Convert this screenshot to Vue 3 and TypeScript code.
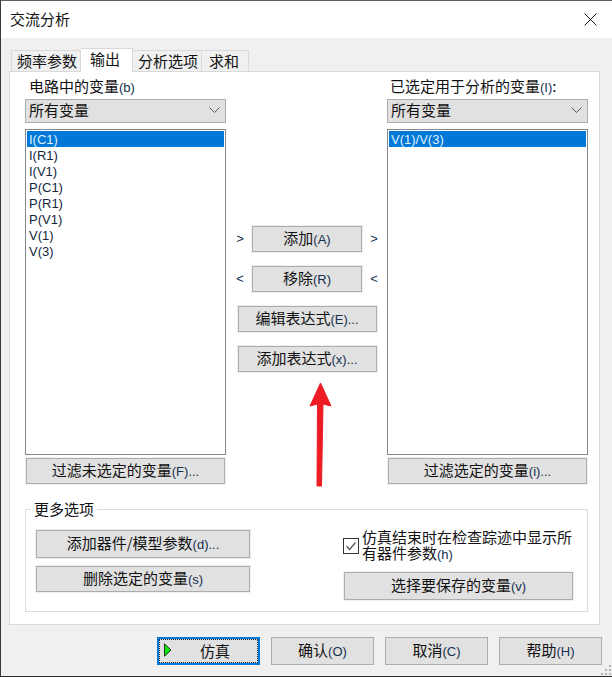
<script setup lang="ts">
const tabs = [
  { id: 'freq', name: '频率参数' },
  { id: 'output', name: '输出' },
  { id: 'options', name: '分析选项' },
  { id: 'sum', name: '求和' },
]
const leftVars = ['I(C1)', 'I(R1)', 'I(V1)', 'P(C1)', 'P(R1)', 'P(V1)', 'V(1)', 'V(3)']
const rightVars = ['V(1)/V(3)']
const footer = [
  { id: 'ok', name: '确认', key: '(O)' },
  { id: 'cancel', name: '取消', key: '(C)' },
  { id: 'help', name: '帮助', key: '(H)' },
]
</script>

<template>
  <div class="dialog">
    <div class="titlebar">
      <span class="title">交流分析</span>
      <svg class="close" width="13" height="13" viewBox="0 0 13 13">
        <path d="M0.5 0.5L12.5 12.5M12.5 0.5L0.5 12.5" stroke="#1a1a1a" stroke-width="1" fill="none" />
      </svg>
    </div>

    <div class="body">
      <div class="tabs">
        <div v-for="t in tabs" :key="t.id" class="tab" :class="[t.id, { active: t.id === 'output' }]">{{ t.name }}</div>
      </div>

      <div class="panel">
        <div class="columns">
          <div class="col">
            <div class="label">电路中的变量<span class="k">(b)</span></div>
            <div class="select">
              <span>所有变量</span>
              <svg width="11" height="6" viewBox="0 0 11 6"><path d="M0.5 0.5L5.5 5.5L10.5 0.5" stroke="#5a5a5a" fill="none" /></svg>
            </div>
            <ul class="list">
              <li v-for="(v, i) in leftVars" :key="v" :class="{ sel: i === 0 }">{{ v }}</li>
            </ul>
            <button class="btn filter">过滤未选定的变量<span class="k">(F)...</span></button>
          </div>

          <div class="center">
            <div class="move-row">
              <span class="mark">&gt;</span>
              <button class="btn move">添加<span class="k">(A)</span></button>
              <span class="mark">&gt;</span>
            </div>
            <div class="move-row">
              <span class="mark">&lt;</span>
              <button class="btn move">移除<span class="k">(R)</span></button>
              <span class="mark">&lt;</span>
            </div>
            <button class="btn expr">编辑表达式<span class="k">(E)...</span></button>
            <button class="btn expr">添加表达式<span class="k">(x)...</span></button>
          </div>

          <div class="col">
            <div class="label right">已选定用于分析的变量<span class="k">(I)</span>:</div>
            <div class="select">
              <span>所有变量</span>
              <svg width="11" height="6" viewBox="0 0 11 6"><path d="M0.5 0.5L5.5 5.5L10.5 0.5" stroke="#5a5a5a" fill="none" /></svg>
            </div>
            <ul class="list">
              <li v-for="v in rightVars" :key="v" class="sel">{{ v }}</li>
            </ul>
            <button class="btn filter">过滤选定的变量<span class="k">(i)...</span></button>
          </div>
        </div>

        <fieldset class="group">
          <legend>更多选项</legend>
          <div class="group-left">
            <button class="btn device">添加器件/模型参数<span class="k">(d)...</span></button>
            <button class="btn remove">删除选定的变量<span class="k">(s)</span></button>
          </div>
          <div class="group-right">
            <div class="check-row">
              <span class="check">
                <svg width="14" height="14" viewBox="0 0 14 14"><path d="M2.5 7L5.5 10.5L11.5 3.5" stroke="#555" stroke-width="1.2" fill="none" /></svg>
              </span>
              <div class="check-text">
                <div>仿真结束时在检查踪迹中显示所</div>
                <div>有器件参数<span class="k">(h)</span></div>
              </div>
            </div>
            <button class="btn save">选择要保存的变量<span class="k">(v)</span></button>
          </div>
        </fieldset>

        <svg class="arrow" width="24" height="108" viewBox="0 0 24 108">
          <path d="M12.5 1L23 24L15 22L13.5 104L9 104L9.5 22L2 24Z" fill="#ed1c24" stroke="#ed1c24" stroke-linejoin="round" />
        </svg>
      </div>

      <div class="footer">
        <button class="btn primary">
          <span class="focus">
            <svg class="play" width="8" height="14" viewBox="0 0 8 14"><path d="M0.5 0.8L7 7L0.5 13.2Z" fill="#12e60f" stroke="#1c3a1c" /></svg>
            <span>仿真</span>
          </span>
        </button>
        <button v-for="b in footer" :key="b.id" class="btn foot">{{ b.name }}<span class="k">{{ b.key }}</span></button>
      </div>

      <svg class="grip" width="11" height="11" viewBox="0 0 11 11">
        <g fill="#b4b4b4">
          <rect x="8" y="0" width="2" height="2" />
          <rect x="4" y="4" width="2" height="2" />
          <rect x="8" y="4" width="2" height="2" />
          <rect x="0" y="8" width="2" height="2" />
          <rect x="4" y="8" width="2" height="2" />
          <rect x="8" y="8" width="2" height="2" />
        </g>
      </svg>
    </div>
  </div>
</template>

<style>
html, body {
  margin: 0;
  overflow: hidden;
  background: #f0f0f0;
}
</style>

<style scoped>
.dialog {
  width: 612px;
  height: 677px;
  box-sizing: border-box;
  border-top: 1px solid #5f5f5f;
  border-left: 1px solid #3a3a3a;
  border-bottom: 1px solid #2c2c2c;
  display: flex;
  flex-direction: column;
  font-family: "Noto Sans CJK SC", "Liberation Sans", sans-serif;
  font-size: 15px;
  line-height: 16px;
  color: #111;
  overflow: hidden;
}
.k {
  font-family: "Liberation Sans", sans-serif;
  font-size: 13px;
  color: #14304f;
}
.titlebar {
  height: 37px;
  flex: none;
  background: #fff;
  display: flex;
  align-items: center;
  justify-content: space-between;
  padding: 0 15px 0 9px;
}
.title {
  margin-bottom: 2px;
}
.body {
  flex: 1;
  position: relative;
  background: #f0f0f0;
  padding: 10px 0 0 8px;
}
.tabs {
  display: flex;
  align-items: flex-end;
  height: 23px;
  padding-left: 2px;
  position: relative;
  z-index: 1;
}
.tab {
  height: 20px;
  padding: 0 3px 0 5px;
  line-height: 20px;
  border: 1px solid #d9d9d9;
  border-bottom: none;
  border-left: none;
  background: #f0f0f0;
}
.tab.freq {
  border-left: 1px solid #d9d9d9;
}
.tab.sum {
  padding: 0 9px 0 7px;
}
.tab.active {
  height: 23px;
  margin-bottom: -1px;
  padding: 0 12px 0 9px;
  line-height: 20px;
  background: #fff;
}
.panel {
  position: relative;
  width: 591px;
  height: 554px;
  box-sizing: border-box;
  background: #fff;
  border: 1px solid #d9d9d9;
  padding: 6px 11px 0 15px;
}
.columns {
  display: grid;
  grid-template-columns: 201px 1fr 201px;
}
.col {
  display: flex;
  flex-direction: column;
}
.label {
  height: 21px;
  padding-left: 4px;
  line-height: 15px;
}
.label.right {
  padding-left: 3px;
}
.select {
  height: 24px;
  box-sizing: border-box;
  border: 1px solid #adadad;
  background: #e1e1e1;
  display: flex;
  align-items: center;
  justify-content: space-between;
  padding: 0 5px 2px 3px;
}
.list {
  list-style: none;
  margin: 6px 0 0;
  padding: 1px;
  height: 326px;
  box-sizing: border-box;
  border: 1px solid #828790;
  background: #fff;
  font-family: "Liberation Sans", sans-serif;
  font-size: 13px;
  color: #14263c;
}
.list li {
  height: 16px;
  line-height: 17px;
  padding-left: 2px;
}
.list li.sel {
  background: #0078d7;
  color: #dff0ff;
}
.btn {
  font: inherit;
  color: inherit;
  padding: 0;
  margin: 0;
  box-sizing: border-box;
  border: 1px solid #adadad;
  background: #e1e1e1;
  box-shadow: 0 0 0 1px #f0f0f0;
  white-space: nowrap;
}
.filter {
  height: 26px;
  margin: 3px 1px 0;
}
.center {
  display: flex;
  flex-direction: column;
  align-items: center;
  gap: 14px;
  padding: 148px 0 0 1px;
}
.move-row {
  display: flex;
  align-items: center;
  justify-content: space-between;
  width: 142px;
  height: 26px;
}
.mark {
  font-family: "Liberation Sans", sans-serif;
  font-size: 13px;
  color: #14304f;
  width: 8px;
  text-align: center;
}
.move {
  width: 110px;
  height: 26px;
}
.expr {
  width: 139px;
  height: 26px;
}
.group {
  margin: 17px 0 0;
  padding: 13px 14px 0 10px;
  height: 111px;
  box-sizing: border-box;
  border: 1px solid #dcdcdc;
  display: flex;
  justify-content: space-between;
  min-width: 0;
}
.group legend {
  margin-left: -5px;
  padding: 0 3px;
  line-height: 16px;
}
.group-left {
  display: flex;
  flex-direction: column;
  gap: 8px;
}
.device {
  width: 214px;
  height: 28px;
}
.remove {
  width: 214px;
  height: 26px;
}
.group-right {
  width: 229px;
  display: flex;
  flex-direction: column;
  gap: 10px;
}
.check-row {
  display: flex;
  align-items: center;
  gap: 3px;
  margin-left: -1px;
  height: 32px;
}
.check {
  flex: none;
  width: 16px;
  height: 16px;
  box-sizing: border-box;
  border: 1px solid #333;
  background: #fff;
  display: flex;
  align-items: center;
  justify-content: center;
}
.check-text {
  width: 212px;
  line-height: 16px;
}
.save {
  width: 229px;
  height: 28px;
}
.arrow {
  position: absolute;
  left: 298px;
  top: 310px;
}
.footer {
  display: flex;
  gap: 11px;
  padding: 12px 0 0 148px;
}
.foot {
  width: 103px;
  height: 28px;
}
.primary {
  width: 103px;
  height: 28px;
  border: 2px solid #0078d7;
  box-shadow: none;
}
.focus {
  display: block;
  position: relative;
  height: 100%;
  box-sizing: border-box;
  border: 1px dotted #222;
  line-height: 22px;
  padding-left: 13px;
}
.play {
  position: absolute;
  left: 4px;
  top: 3px;
}
.grip {
  position: absolute;
  right: 0;
  bottom: 0;
}
</style>
